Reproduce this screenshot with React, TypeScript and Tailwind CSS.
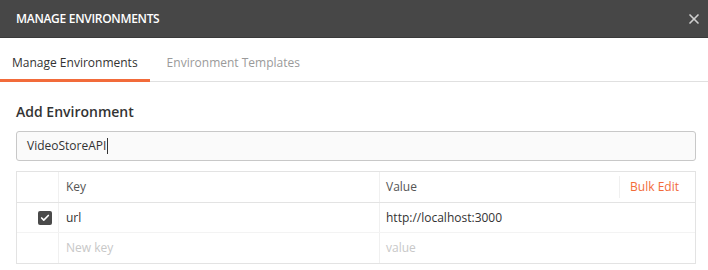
import { Check, X } from "lucide-react";

const font = { fontFamily: '"Open Sans", "Noto Sans", sans-serif' };

const App = () => (
  <div className="w-[708px] h-[270px] bg-white overflow-hidden text-[12px] text-[#505050]" style={font}>
    {/* title bar */}
    <div className="h-[38px] bg-[#474747] border-b border-[#3a3a3a] flex items-center justify-between pl-4 pr-[6px]">
      <span className="text-[12px] font-semibold text-white tracking-[-0.3px]">MANAGE ENVIRONMENTS</span>
      <X className="w-[16px] h-[16px] text-[#cfcfcf]" strokeWidth={2.5} />
    </div>

    {/* tabs */}
    <div className="flex h-[44px] border-b border-[#e0e0e0]">
      <div className="px-[12px] flex items-center border-b-[3px] border-[#f26b3a] text-[#333] -mb-px pt-[8px]">
        Manage Environments
      </div>
      <div className="px-[17px] flex items-center text-[#9a9a9a] pt-[6px]">Environment Templates</div>
    </div>

    <div className="px-4">
      <h2 className="text-[14px] font-semibold text-[#333] mt-[20px] leading-[20px]">Add Environment</h2>

      <div className="mt-[9px] w-[680px] h-[30px] rounded-[3px] border border-[#c8c8c8] bg-[#fafafa] flex items-center pl-[10px] text-[12px] text-[#333]">
        VideoStoreAPI<span className="w-px h-[16px] bg-[#333] ml-px" />
      </div>

      {/* key/value table */}
      <div className="mt-[10px] w-[680px] border border-[#e3e3e3]">
        <div className="flex h-[31px] border-b border-[#e3e3e3] text-[#555]">
          <div className="w-[42px] border-r border-[#f0f0f0]" />
          <div className="w-[321px] border-r border-[#f0f0f0] flex items-center pl-[7px]">Key</div>
          <div className="flex-1 flex items-center pl-[6px]">
            <span className="flex-1">Value</span>
            <span className="h-[22px] border-l border-[#f0f0f0] pl-[10px] pr-[16px] flex items-center text-[#f26b3a]">
              Bulk Edit
            </span>
          </div>
        </div>
        <div className="flex h-[30px] border-b border-[#f3f3f3] text-[#333]">
          <div className="w-[42px] border-r border-[#f0f0f0] flex items-center justify-end pr-[6px]">
            <span className="w-[14px] h-[14px] rounded-[2px] bg-[#4a4a4a] flex items-center justify-center">
              <Check className="w-[10px] h-[10px] text-white" strokeWidth={4} />
            </span>
          </div>
          <div className="w-[321px] border-r border-[#f0f0f0] flex items-center pl-[7px]">url</div>
          <div className="flex-1 flex items-center pl-[6px]">http://localhost:3000</div>
        </div>
        <div className="flex h-[30px] text-[#c8c8c8]">
          <div className="w-[42px] border-r border-[#f0f0f0]" />
          <div className="w-[321px] border-r border-[#f0f0f0] flex items-center pl-[7px]">New key</div>
          <div className="flex-1 flex items-center pl-[6px]">value</div>
        </div>
      </div>
    </div>
  </div>
);

export default App;
